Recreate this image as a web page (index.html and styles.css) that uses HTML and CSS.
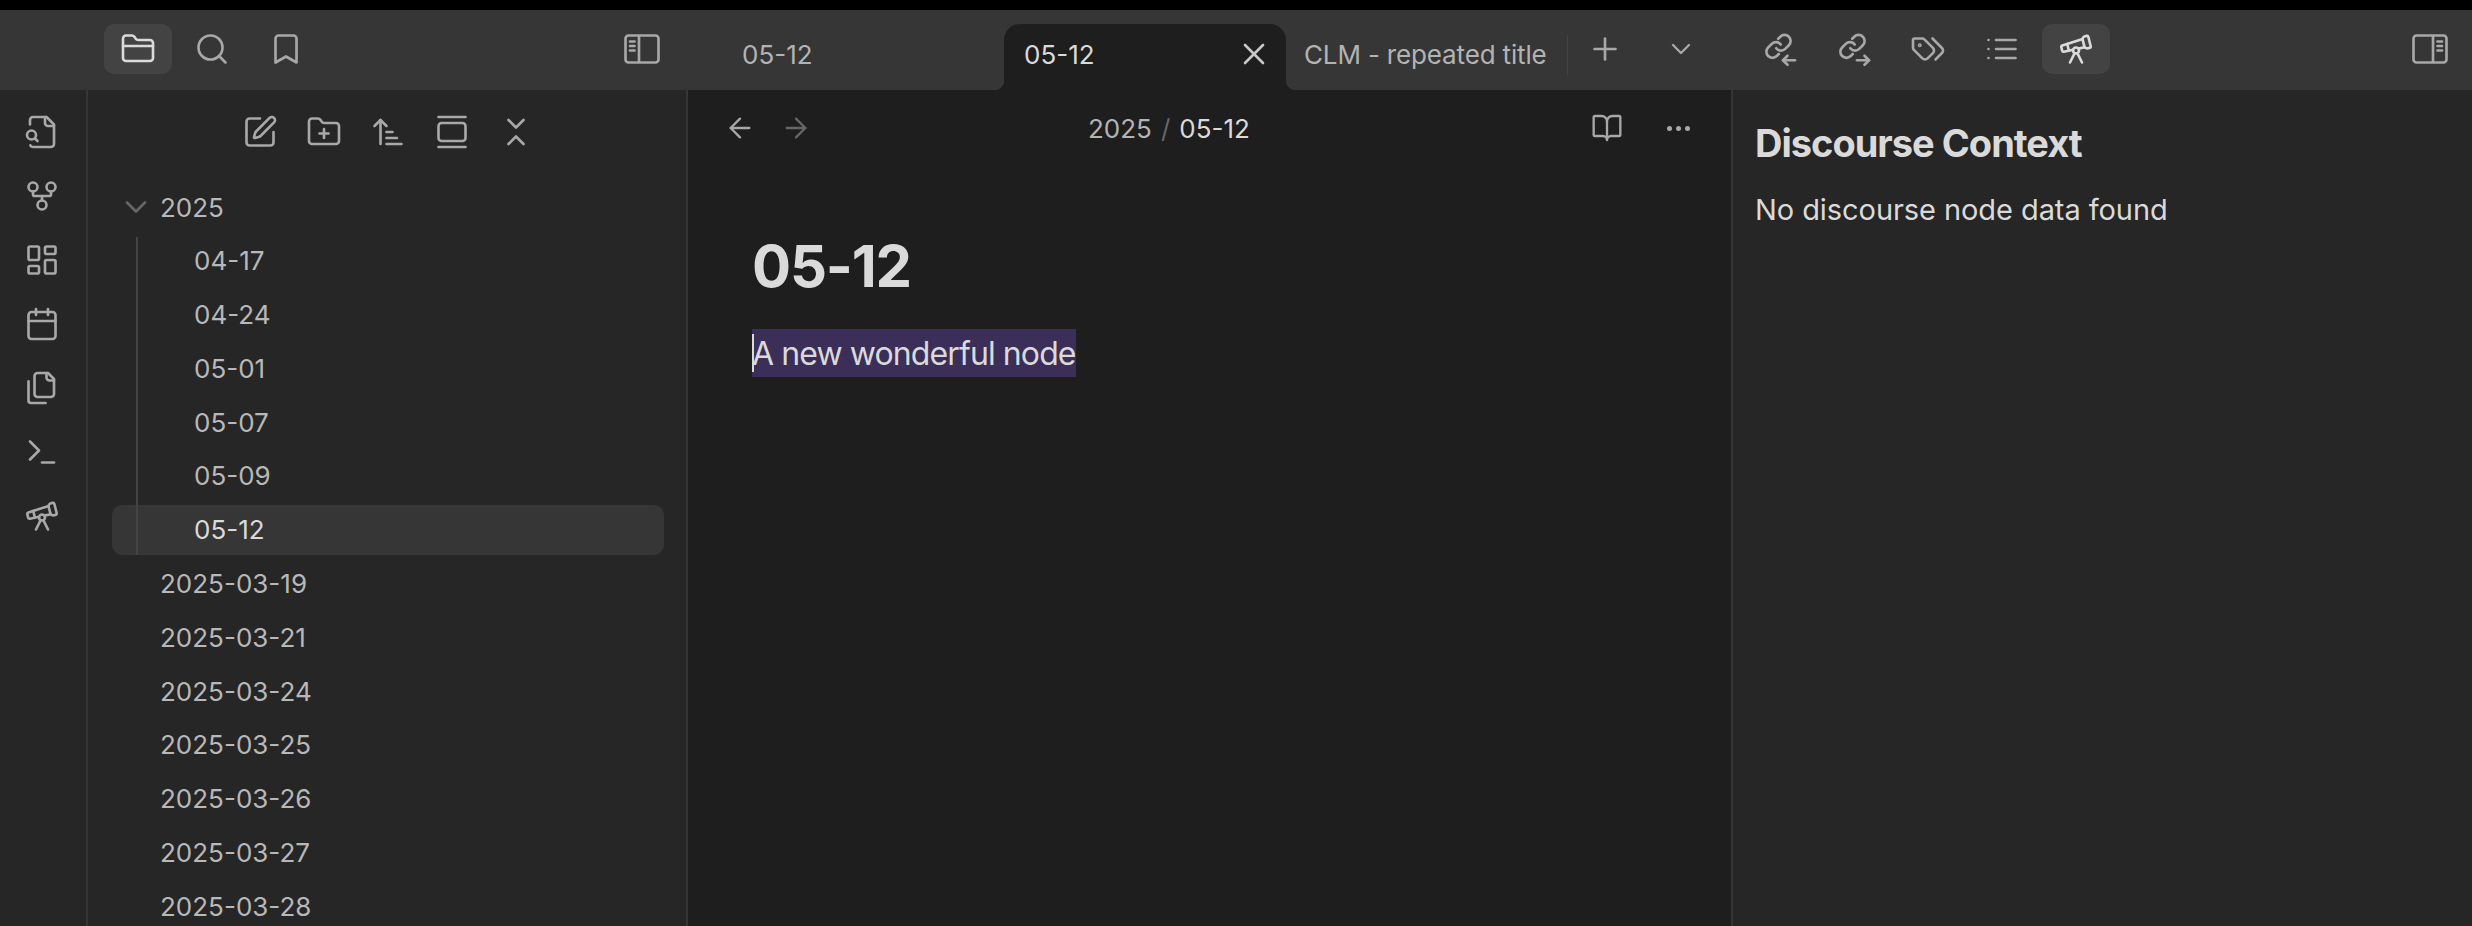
FILE: index.html
```html
<!DOCTYPE html>
<html>
<head>
    <meta charset="utf-8" />
    <meta name="viewport" content="width=device-width, initial-scale=1" />
    <title>05-12</title>
    <link rel="stylesheet" href="styles.css">
</head>
<body>
    <svg class="sprite">
        <symbol id="i-folder" viewBox="0 0 24 24"><path d="M20 20a2 2 0 0 0 2-2V8a2 2 0 0 0-2-2h-7.9a2 2 0 0 1-1.69-.9L9.6 3.9A2 2 0 0 0 7.93 3H4a2 2 0 0 0-2 2v13a2 2 0 0 0 2 2Z"/><path d="M2 10h20"/></symbol>
        <symbol id="i-search" viewBox="0 0 24 24"><circle cx="11" cy="11" r="8"/><path d="m21 21-4.3-4.3"/></symbol>
        <symbol id="i-bookmark" viewBox="0 0 24 24"><path d="m19 21-7-4-7 4V5a2 2 0 0 1 2-2h10a2 2 0 0 1 2 2v16z"/></symbol>
        <symbol id="i-side-left" viewBox="0 0 24 24"><path d="M21 3H3a2 2 0 0 0-2 2v14a2 2 0 0 0 2 2h18a2 2 0 0 0 2-2V5a2 2 0 0 0-2-2Z"/><path d="M10 4v16"/><path d="M4 7h3"/><path d="M4 10h3"/><path d="M4 13h3"/></symbol>
        <symbol id="i-side-right" viewBox="0 0 24 24"><path d="M3 3h18a2 2 0 0 1 2 2v14a2 2 0 0 1-2 2H3a2 2 0 0 1-2-2V5a2 2 0 0 1 2-2Z"/><path d="M14 4v16"/><path d="M17 7h3"/><path d="M17 10h3"/><path d="M17 13h3"/></symbol>
        <symbol id="i-file-search" viewBox="0 0 24 24"><path d="M14 2v4a2 2 0 0 0 2 2h4"/><path d="M4.268 21a2 2 0 0 0 1.727 1H18a2 2 0 0 0 2-2V7l-5-5H6a2 2 0 0 0-2 2v3"/><path d="m9 18-1.5-1.5"/><circle cx="5" cy="14" r="3"/></symbol>
        <symbol id="i-fork" viewBox="0 0 24 24"><circle cx="12" cy="18" r="3"/><circle cx="6" cy="6" r="3"/><circle cx="18" cy="6" r="3"/><path d="M18 9v2c0 .6-.4 1-1 1H7c-.6 0-1-.4-1-1V9"/><path d="M12 12v3"/></symbol>
        <symbol id="i-dashboard" viewBox="0 0 24 24"><rect width="7" height="9" x="3" y="3" rx="1"/><rect width="7" height="5" x="14" y="3" rx="1"/><rect width="7" height="9" x="14" y="12" rx="1"/><rect width="7" height="5" x="3" y="16" rx="1"/></symbol>
        <symbol id="i-calendar" viewBox="0 0 24 24"><path d="M8 2v4"/><path d="M16 2v4"/><rect width="18" height="18" x="3" y="4" rx="2"/><path d="M3 10h18"/></symbol>
        <symbol id="i-files" viewBox="0 0 24 24"><path d="M20 7h-3a2 2 0 0 1-2-2V2"/><path d="M9 18a2 2 0 0 1-2-2V4a2 2 0 0 1 2-2h7l4 4v10a2 2 0 0 1-2 2Z"/><path d="M3 7.6v12.8A1.6 1.6 0 0 0 4.6 22h9.8"/></symbol>
        <symbol id="i-terminal" viewBox="0 0 24 24"><path d="m4 17 6-6-6-6"/><path d="M12 19h8"/></symbol>
        <symbol id="i-telescope" viewBox="0 0 24 24"><path d="m10.065 12.493-6.18 1.318a.934.934 0 0 1-1.108-.702l-.537-2.15a1.07 1.07 0 0 1 .691-1.265l13.504-4.44"/><path d="m13.56 11.747 4.332-.924"/><path d="m16 21-3.105-6.21"/><path d="M16.485 5.94a2 2 0 0 1 1.455-2.425l1.09-.272a1 1 0 0 1 1.212.727l1.515 6.06a1 1 0 0 1-.727 1.213l-1.09.272a2 2 0 0 1-2.425-1.455z"/><path d="m6.158 8.633 1.114 4.456"/><path d="m8 21 3.105-6.21"/><circle cx="12" cy="13" r="2"/></symbol>
        <symbol id="i-edit" viewBox="0 0 24 24"><path d="M12 3H5a2 2 0 0 0-2 2v14a2 2 0 0 0 2 2h14a2 2 0 0 0 2-2v-7"/><path d="M18.375 2.625a1 1 0 0 1 3 3l-9.013 9.014a2 2 0 0 1-.853.505l-2.873.84a.5.5 0 0 1-.62-.62l.84-2.873a2 2 0 0 1 .506-.852z"/></symbol>
        <symbol id="i-folder-plus" viewBox="0 0 24 24"><path d="M12 10v6"/><path d="M9 13h6"/><path d="M20 20a2 2 0 0 0 2-2V8a2 2 0 0 0-2-2h-7.9a2 2 0 0 1-1.69-.9L9.6 3.9A2 2 0 0 0 7.93 3H4a2 2 0 0 0-2 2v13a2 2 0 0 0 2 2Z"/></symbol>
        <symbol id="i-sort" viewBox="0 0 24 24"><path d="m3 8 4-4 4 4"/><path d="M7 4v16"/><path d="M11 12h4"/><path d="M11 16h7"/><path d="M11 20h10"/></symbol>
        <symbol id="i-reveal" viewBox="0 0 24 24"><path d="M3 2h18"/><rect width="18" height="12" x="3" y="6" rx="2"/><path d="M3 22h18"/></symbol>
        <symbol id="i-collapse" viewBox="0 0 24 24"><path d="m7 20 5-5 5 5"/><path d="m7 4 5 5 5-5"/></symbol>
        <symbol id="i-chevron" viewBox="0 0 24 24"><path d="m6 9 6 6 6-6"/></symbol>
        <symbol id="i-plus" viewBox="0 0 24 24"><path d="M5 12h14"/><path d="M12 5v14"/></symbol>
        <symbol id="i-x" viewBox="0 0 24 24"><path d="M18 6 6 18"/><path d="m6 6 12 12"/></symbol>
        <symbol id="i-left" viewBox="0 0 24 24"><path d="m12 19-7-7 7-7"/><path d="M19 12H5"/></symbol>
        <symbol id="i-right" viewBox="0 0 24 24"><path d="M5 12h14"/><path d="m12 5 7 7-7 7"/></symbol>
        <symbol id="i-book" viewBox="0 0 24 24"><path d="M12 7v14"/><path d="M3 18a1 1 0 0 1-1-1V4a1 1 0 0 1 1-1h5a4 4 0 0 1 4 4 4 4 0 0 1 4-4h5a1 1 0 0 1 1 1v13a1 1 0 0 1-1 1h-6a3 3 0 0 0-3 3 3 3 0 0 0-3-3z"/></symbol>
        <symbol id="i-tags" viewBox="0 0 24 24"><path d="m15 5 6.3 6.3a2.4 2.4 0 0 1 0 3.4L17 19"/><path d="M9.586 5.586A2 2 0 0 0 8.172 5H3a1 1 0 0 0-1 1v5.172a2 2 0 0 0 .586 1.414L8.29 18.29a2.426 2.426 0 0 0 3.42 0l3.58-3.58a2.426 2.426 0 0 0 0-3.42z"/><circle cx="6.5" cy="9.5" r=".5"/></symbol>
        <symbol id="i-list" viewBox="0 0 24 24"><path d="M3 12h.01"/><path d="M3 18h.01"/><path d="M3 6h.01"/><path d="M8 12h13"/><path d="M8 18h13"/><path d="M8 6h13"/></symbol>
        <symbol id="i-link-in" viewBox="0 0 24 24"><path d="M9.5 11.5a4 4 0 0 0 6 .4l2.4-2.4a4 4 0 0 0-5.7-5.7l-1.4 1.4"/><path d="M12.5 9a4 4 0 0 0-6-.4l-2.4 2.4a4 4 0 0 0 5.7 5.7l1.4-1.4"/><path d="M22 19.5h-8"/><path d="m17 16.5-3 3 3 3"/></symbol>
        <symbol id="i-link-out" viewBox="0 0 24 24"><path d="M9.5 11.5a4 4 0 0 0 6 .4l2.4-2.4a4 4 0 0 0-5.7-5.7l-1.4 1.4"/><path d="M12.5 9a4 4 0 0 0-6-.4l-2.4 2.4a4 4 0 0 0 5.7 5.7l1.4-1.4"/><path d="M14 19.5h8"/><path d="m19 16.5 3 3-3 3"/></symbol>
    </svg>

    <div class="top-strip"></div>

    <div class="titlebar">
        <div class="titlebar-left">
            <div class="btn-group">
                <div class="icon-btn active"><svg class="icon"><use href="#i-folder"/></svg></div>
                <div class="icon-btn"><svg class="icon"><use href="#i-search"/></svg></div>
                <div class="icon-btn"><svg class="icon"><use href="#i-bookmark"/></svg></div>
            </div>
            <div class="icon-btn"><svg class="icon"><use href="#i-side-left"/></svg></div>
        </div>
        <div class="tabs">
            <div class="tab">05-12</div>
            <div class="tab active">
                <span>05-12</span>
                <svg class="icon tab-close"><use href="#i-x"/></svg>
            </div>
            <div class="tab with-sep">CLM - repeated title</div>
            <div class="icon-btn tab-plus"><svg class="icon"><use href="#i-plus"/></svg></div>
            <div class="icon-btn tab-list"><svg class="icon"><use href="#i-chevron"/></svg></div>
        </div>
        <div class="titlebar-right">
            <div class="btn-group">
                <div class="icon-btn"><svg class="icon"><use href="#i-link-in"/></svg></div>
                <div class="icon-btn"><svg class="icon"><use href="#i-link-out"/></svg></div>
                <div class="icon-btn"><svg class="icon"><use href="#i-tags"/></svg></div>
                <div class="icon-btn"><svg class="icon"><use href="#i-list"/></svg></div>
                <div class="icon-btn active"><svg class="icon"><use href="#i-telescope"/></svg></div>
            </div>
            <div class="icon-btn"><svg class="icon"><use href="#i-side-right"/></svg></div>
        </div>
    </div>

    <div class="workspace">
        <div class="ribbon">
            <svg class="icon"><use href="#i-file-search"/></svg>
            <svg class="icon"><use href="#i-fork"/></svg>
            <svg class="icon"><use href="#i-dashboard"/></svg>
            <svg class="icon"><use href="#i-calendar"/></svg>
            <svg class="icon"><use href="#i-files"/></svg>
            <svg class="icon"><use href="#i-terminal"/></svg>
            <svg class="icon"><use href="#i-telescope"/></svg>
        </div>

        <div class="sidebar">
            <div class="file-nav">
                <svg class="icon"><use href="#i-edit"/></svg>
                <svg class="icon"><use href="#i-folder-plus"/></svg>
                <svg class="icon"><use href="#i-sort"/></svg>
                <svg class="icon"><use href="#i-reveal"/></svg>
                <svg class="icon"><use href="#i-collapse"/></svg>
            </div>
            <div class="tree">
                <div class="tree-row parent">
                    <svg class="icon tree-toggle"><use href="#i-chevron"/></svg>
                    <span>2025</span>
                </div>
                <div class="tree-children">
                    <div class="tree-row child">04-17</div>
                    <div class="tree-row child">04-24</div>
                    <div class="tree-row child">05-01</div>
                    <div class="tree-row child">05-07</div>
                    <div class="tree-row child">05-09</div>
                    <div class="tree-row child active">05-12</div>
                </div>
                <div class="tree-row">2025-03-19</div>
                <div class="tree-row">2025-03-21</div>
                <div class="tree-row">2025-03-24</div>
                <div class="tree-row">2025-03-25</div>
                <div class="tree-row">2025-03-26</div>
                <div class="tree-row">2025-03-27</div>
                <div class="tree-row">2025-03-28</div>
            </div>
        </div>

        <div class="main">
            <div class="view-header">
                <div class="view-nav">
                    <svg class="icon small"><use href="#i-left"/></svg>
                    <svg class="icon small dim"><use href="#i-right"/></svg>
                </div>
                <div class="breadcrumb">
                    <span>2025</span>
                    <span class="crumb-sep">/</span>
                    <span class="crumb-current">05-12</span>
                </div>
                <div class="view-actions">
                    <svg class="icon small"><use href="#i-book"/></svg>
                    <span class="dots"><i></i><i></i><i></i></span>
                </div>
            </div>
            <div class="note">
                <h1>05-12</h1>
                <p><span class="selection">A new wonderful node</span></p>
            </div>
        </div>

        <div class="context">
            <h2>Discourse Context</h2>
            <p>No discourse node data found</p>
        </div>
    </div>
</body>
</html>
```

FILE: styles.css
```css
* {
    box-sizing: border-box;
}

html, body {
    height: 926px;
    overflow: hidden;
}

body {
    margin: 0;
    background-color: #1e1e1e;
    color: #dadada;
    font-family: Inter, "Liberation Sans", sans-serif;
    font-size: 26px;
    display: flex;
    flex-direction: column;
}

.sprite {
    display: none;
}

.icon {
    width: 36px;
    height: 36px;
    fill: none;
    stroke: #a8a8a8;
    stroke-width: 1.75;
    stroke-linecap: round;
    stroke-linejoin: round;
    flex-shrink: 0;
}

.icon.small {
    width: 32px;
    height: 32px;
}

.icon.dim {
    stroke: #666666;
}

.top-strip {
    height: 10px;
    background-color: #000;
    flex-shrink: 0;
}

/* title bar */
.titlebar {
    height: 80px;
    flex-shrink: 0;
    display: flex;
    background-color: #363636;
}

.titlebar-left {
    width: 688px;
    padding: 14px 12px 0 104px;
    display: flex;
    justify-content: space-between;
    align-items: flex-start;
}

.titlebar-right {
    flex: 1;
    padding: 14px 8px 0 13px;
    display: flex;
    justify-content: space-between;
    align-items: flex-start;
}

.btn-group {
    display: flex;
    gap: 6px;
}

.icon-btn {
    width: 68px;
    height: 50px;
    border-radius: 10px;
    display: flex;
    align-items: center;
    justify-content: center;
}

.icon-btn.active {
    background-color: #434343;
}

.icon-btn.active .icon {
    stroke: #dadada;
}

.tabs {
    width: 1045px;
    padding: 14px 0 0 34px;
    display: flex;
    align-items: flex-start;
}

.tab {
    width: 282px;
    height: 66px;
    padding: 0 0 6px 20px;
    display: flex;
    align-items: center;
    color: #b3b3b3;
    position: relative;
}

.tab.active {
    padding: 0 14px 6px 20px;
    justify-content: space-between;
    color: #dadada;
    background-color: #1e1e1e;
    border-radius: 16px 16px 0 0;
}

/* little flared corners at the foot of the active tab */
.tab.active::before,
.tab.active::after {
    content: "";
    position: absolute;
    bottom: 0;
    width: 10px;
    height: 10px;
}

.tab.active::before {
    left: -10px;
    background: radial-gradient(circle at 0 0, transparent 10px, #1e1e1e 10.5px);
}

.tab.active::after {
    right: -10px;
    background: radial-gradient(circle at 100% 0, transparent 10px, #1e1e1e 10.5px);
}

.tab.with-sep {
    padding-left: 18px;
    letter-spacing: -0.15px;
}

.tab.with-sep::after {
    content: "";
    position: absolute;
    right: 0;
    top: 11px;
    height: 40px;
    width: 1px;
    background-color: #434343;
}

.tab-close {
    stroke: #c8c8c8;
}

.tab-plus {
    margin: 0 0 0 3px;
}

.tab-list {
    margin-left: 8px;
}

.tab-list .icon {
    width: 32px;
    height: 32px;
}

/* workspace columns */
.workspace {
    flex: 1;
    display: flex;
    min-height: 0;
}

.ribbon {
    width: 88px;
    flex-shrink: 0;
    padding-top: 24px;
    padding-right: 2px;
    background-color: #262626;
    border-right: 2px solid #363636;
    display: flex;
    flex-direction: column;
    align-items: center;
    gap: 28px;
}

.sidebar {
    width: 600px;
    flex-shrink: 0;
    background-color: #262626;
    border-right: 2px solid #363636;
}

.file-nav {
    height: 84px;
    padding-top: 24px;
    padding-left: 154px;
    display: flex;
    align-items: flex-start;
    gap: 28px;
}

.tree {
    padding: 8px 22px 0 24px;
    display: flex;
    flex-direction: column;
    gap: 3.8px;
}

.tree-row {
    height: 50px;
    flex-shrink: 0;
    padding-left: 48px;
    display: flex;
    align-items: center;
    color: #b8b8b8;
    border-radius: 10px;
}

.tree-row.parent {
    padding-left: 6px;
    gap: 6px;
}

.tree-toggle {
    stroke: #666666;
}

.tree-children {
    display: flex;
    flex-direction: column;
    gap: 3.8px;
    position: relative;
}

.tree-children::before {
    content: "";
    position: absolute;
    left: 24px;
    top: 1px;
    bottom: 0;
    width: 2px;
    background-color: #444444;
}

.tree-row.child {
    padding-left: 82px;
}

.tree-row.active {
    background-color: #363636;
    color: #dadada;
}

.main {
    width: 1045px;
    flex-shrink: 0;
    border-right: 2px solid #363636;
}

.view-header {
    height: 76px;
    padding: 0 41px 0 36px;
    display: flex;
    align-items: center;
}

.view-nav {
    display: flex;
    gap: 24px;
}

.breadcrumb {
    margin-left: 276px;
    display: flex;
    align-items: center;
    gap: 9px;
    color: #b3b3b3;
}

.crumb-sep {
    color: #666666;
}

.crumb-current {
    color: #dadada;
}

.view-actions {
    margin-left: auto;
    display: flex;
    align-items: center;
    gap: 44px;
}

.dots {
    display: flex;
    gap: 4px;
}

.dots i {
    width: 5px;
    height: 5px;
    border-radius: 50%;
    background-color: #a8a8a8;
}

.note {
    padding: 64px 0 0 64px;
}

.note h1 {
    margin: 0;
    font-size: 58px;
    line-height: 72px;
    font-weight: 700;
    letter-spacing: -1.2px;
}

.note p {
    margin: 27px 0 0 0;
    font-size: 32px;
    line-height: 47px;
    letter-spacing: -0.9px;
}

.selection {
    display: inline-block;
    padding-top: 1px;
    background-color: #3b2e58;
    position: relative;
}

/* text cursor */
.selection::before {
    content: "";
    position: absolute;
    left: 0;
    top: 5px;
    height: 38px;
    width: 2px;
    background-color: #dadada;
}

.context {
    flex: 1;
    padding: 0 22px;
    background-color: #262626;
}

.context h2 {
    margin: 26px 0 0 0;
    font-size: 38px;
    line-height: 54px;
    font-weight: 700;
    letter-spacing: -1px;
}

.context p {
    margin: 20px 0 0 0;
    font-size: 29px;
    line-height: 40px;
    letter-spacing: -0.07px;
}
```
